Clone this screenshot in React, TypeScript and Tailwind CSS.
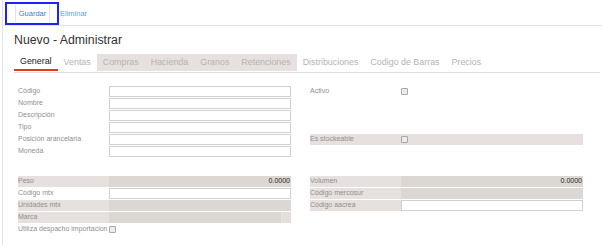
import React from "react";

type RowKind = "input" | "gray" | "check" | "empty" | "select";

type Row = {
  label?: string;
  kind: RowKind;
  value?: string;
  labelGray?: boolean;
  rowGray?: boolean;
};

const tabs = [
  { name: "General", active: true },
  { name: "Ventas" },
  { name: "Compras", shaded: true },
  { name: "Hacienda", shaded: true },
  { name: "Granos", shaded: true },
  { name: "Retenciones", shaded: true },
  { name: "Distribuciones" },
  { name: "Codigo de Barras" },
  { name: "Precios" },
];

const firstLeft: Row[] = [
  { label: "Código", kind: "input" },
  { label: "Nombre", kind: "input" },
  { label: "Descripción", kind: "input" },
  { label: "Tipo", kind: "input" },
  { label: "Posición arancelaria", kind: "input" },
  { label: "Moneda", kind: "input" },
];

const firstRight: Row[] = [
  { label: "Activo", kind: "check" },
  { kind: "empty" },
  { kind: "empty" },
  { kind: "empty" },
  { label: "Es stockeable", kind: "check", rowGray: true },
  { kind: "empty" },
];

const secondLeft: Row[] = [
  { label: "Peso", kind: "gray", value: "0.0000", labelGray: true },
  { label: "Código mtx", kind: "input" },
  { label: "Unidades mtx", kind: "gray", labelGray: true },
  { label: "Marca", kind: "select", labelGray: true },
  { label: "Utiliza despacho importacion", kind: "check" },
];

const secondRight: Row[] = [
  { label: "Volumen", kind: "gray", value: "0.0000", labelGray: true },
  { label: "Código mercosur", kind: "gray", labelGray: true },
  { label: "Código aacrea", kind: "input", labelGray: true },
];

function Checkbox() {
  return (
    <span className="inline-block h-[7px] w-[7px] rounded-[1px] border border-[#a8a8a8] bg-[#ececec]" />
  );
}

function FormRow({ row }: { row: Row }) {
  return (
    <div
      className={`mb-[1px] flex h-[11px] items-center ${
        row.rowGray ? "bg-[#e6e1de]" : ""
      }`}
    >
      <div
        className={`flex h-full w-[91px] shrink-0 items-center whitespace-nowrap text-[7px] text-[#8f8f8f] ${
          row.labelGray ? "bg-[#e6e1de]" : ""
        }`}
      >
        {row.label}
      </div>

      {row.kind === "input" && (
        <div className="h-full flex-1 border border-[#d0d0d0] bg-white" />
      )}

      {row.kind === "gray" && (
        <div className="flex h-full flex-1 items-center justify-end bg-[#ddd7d3] pr-[1px] text-[7px] text-[#222]">
          {row.value}
        </div>
      )}

      {row.kind === "select" && (
        <div className="flex h-full flex-1 justify-end bg-[#ddd7d3]">
          <div className="h-full w-[10px] border-l border-[#e8e4e1] bg-[#e3dedb]" />
        </div>
      )}

      {row.kind === "check" && (
        <div className="flex h-full flex-1 items-center">
          <Checkbox />
        </div>
      )}
    </div>
  );
}

function Column({ rows }: { rows: Row[] }) {
  return (
    <div className="w-[273px]">
      {rows.map((row, i) => (
        <FormRow key={i} row={row} />
      ))}
    </div>
  );
}

export default function App() {
  return (
    <div
      className="ml-[2px] h-[245px] w-[600px] overflow-hidden border-l border-[#e2e2e2] bg-white"
      style={{ fontFamily: '"Liberation Sans", Arial, sans-serif' }}
    >
      {/* Toolbar */}

      <div className="flex h-[26px] items-start border-b border-[#e6e6e6] pt-[2px]">
        <div className="ml-[2px] flex h-[23px] w-[54px] items-start border-2 border-[#1b24f0] pl-[8px] pt-[1px]">
          <div className="flex h-[17px] w-[35px] items-center justify-center border-x border-[#e4e4e4] text-[7.5px] text-[#3d7cc9]">
            Guardar
          </div>
        </div>

        <span className="ml-[1px] mt-[6px] text-[7.5px] text-[#5aa4e6]">
          Eliminar
        </span>
      </div>

      {/* Title */}

      <h1 className="ml-[11px] mt-[7px] text-[12.3px] leading-[15px] text-[#333]">
        Nuevo - Administrar
      </h1>

      {/* Tabs */}

      <div className="ml-[11px] mr-[2px] mt-[6px] flex border-b border-[#dedede]">
        {tabs.map((tab) => (
          <div
            key={tab.name}
            className={`flex h-[17px] items-center px-[6px] text-[8.9px] ${
              tab.active
                ? "-mb-px border-b-2 border-[#e03a1f] text-[#222]"
                : "text-[#b3b3b3]"
            } ${tab.shaded ? "mb-[1px] bg-[#e6e1de]" : ""}`}
          >
            {tab.name}
          </div>
        ))}
      </div>

      {/* Form */}

      <div className="ml-[15px] mt-[13px] flex gap-[19px]">
        <Column rows={firstLeft} />
        <Column rows={firstRight} />
      </div>

      <div className="ml-[15px] mt-[18px] flex gap-[19px]">
        <Column rows={secondLeft} />
        <Column rows={secondRight} />
      </div>
    </div>
  );
}
